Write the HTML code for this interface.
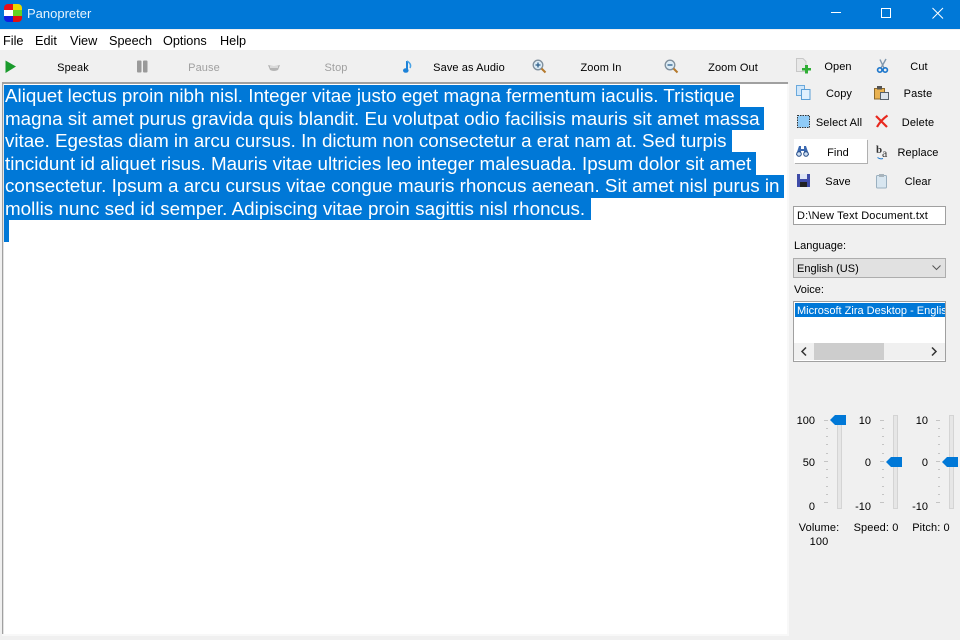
<!DOCTYPE html>
<html><head><meta charset="utf-8"><title>Panopreter</title>
<style>
html,body{margin:0;padding:0;width:960px;height:640px;overflow:hidden;background:#f0f0f0;font-family:"Liberation Sans",sans-serif;color:#000}
.a{position:absolute;white-space:nowrap}
.t{position:absolute;white-space:nowrap;font-size:11px;line-height:14px;transform:translate(-50%,1px);letter-spacing:.1px}
.g{color:#a0a0a0}
.m{position:absolute;top:33px;font-size:12.7px;line-height:16px;white-space:nowrap}
.sel{position:absolute;left:4px;height:23px;background:#0078d7}
.ln{position:absolute;left:5px;font-size:18.8px;line-height:22px;color:#fff;white-space:nowrap}
.n{position:absolute;font-size:11px;line-height:14px;text-align:right;width:30px;transform:translateY(1px)}
svg{position:absolute;overflow:visible}
</style></head><body>
<div class="a" style="left:0;top:0;width:960px;height:29px;background:#0078d7"></div>
<svg style="left:4px;top:4px" width="18" height="18" viewBox="0 0 18 18">
<defs><clipPath id="c"><rect width="18" height="18" rx="4"/></clipPath></defs>
<g clip-path="url(#c)"><rect width="9" height="6" fill="#e8101a"/><rect x="9" width="9" height="6" fill="#e8d800"/><rect y="6" width="9" height="6" fill="#fff"/><rect x="9" y="6" width="9" height="6" fill="#62d321"/><rect y="12" width="9" height="6" fill="#1020e0"/><rect x="9" y="12" width="9" height="6" fill="#e01010"/></g></svg>
<div class="a" style="left:27px;top:6px;font-size:13px;line-height:16px;color:#e8f3fc">Panopreter</div>
<svg style="left:831px;top:7px" width="120" height="14"><path d="M0 5.500H10" stroke="#fff" fill="none"/><rect x="50.500" y="1.500" width="9" height="9" stroke="#fff" fill="none"/><path d="M101.500 1L112 11.500M112 1L101.500 11.500" stroke="#fff" fill="none"/></svg>

<div class="a" style="left:0;top:30px;width:960px;height:20px;background:#fff"></div>
<div class="m" style="left:3px">File</div><div class="m" style="left:35px">Edit</div><div class="m" style="left:70px">View</div><div class="m" style="left:109px">Speech</div><div class="m" style="left:163px">Options</div><div class="m" style="left:220px">Help</div>

<svg style="left:5px;top:60px" width="12" height="14"><path d="M0.500 0.500L11 6.500L0.500 13Z" fill="#1a9a2c"/></svg>
<div class="t" style="left:73px;top:60px">Speak</div>
<svg style="left:137px;top:60px" width="12" height="13"><rect x="0" y="0.500" width="4.500" height="12" rx="1" fill="#9a9a9a"/><rect x="6" y="0.500" width="4.500" height="12" rx="1" fill="#9a9a9a"/></svg>
<div class="t g" style="left:204px;top:60px">Pause</div>
<svg style="left:268px;top:64px" width="13" height="9"><path d="M0 1Q6 3 12 1L10 6Q6 8 2 6Z" fill="#b4b4b4"/><path d="M2 3H10" stroke="#fff"/></svg>
<div class="t g" style="left:336px;top:60px">Stop</div>
<svg style="left:403px;top:60px" width="10" height="14"><path d="M4 1V10" stroke="#1c82d8" stroke-width="2"/><ellipse cx="2.800" cy="10.500" rx="2.800" ry="2.300" fill="#1c82d8"/><path d="M4 1Q9 4 7 8" stroke="#4aa3e6" stroke-width="1.500" fill="none"/></svg>
<div class="t" style="left:469px;top:60px">Save as Audio</div>
<svg style="left:532px;top:59px" width="15" height="15"><circle cx="6" cy="6" r="4.800" fill="#dcebf5" stroke="#7f8f9c" stroke-width="1.300"/><path d="M3.500 6H8.500M6 3.500V8.500" stroke="#2d5f8a" stroke-width="1.300"/><path d="M9.500 9.500L13.500 13.500" stroke="#b5792c" stroke-width="2"/></svg>
<div class="t" style="left:601px;top:60px">Zoom In</div>
<svg style="left:664px;top:59px" width="15" height="15"><circle cx="6" cy="6" r="4.800" fill="#dcebf5" stroke="#7f8f9c" stroke-width="1.300"/><path d="M3.500 6H8.500" stroke="#2d5f8a" stroke-width="1.300"/><path d="M9.500 9.500L13.500 13.500" stroke="#b5792c" stroke-width="2"/></svg>
<div class="t" style="left:733px;top:60px">Zoom Out</div>

<div class="a" style="left:2px;top:82px;width:786px;height:553px;background:#fff;box-shadow:inset 1px 0 0 #a0a0a0,inset 2px 0 0 #e3e3e3,inset -1px -1px 0 #f0f0f0;"></div>
<div class="a" style="left:2px;top:82px;width:786px;height:2px;background:#a0a0a0"></div>
<div class="a" style="left:787px;top:84px;width:2px;height:552px;background:#f8f8f8"></div>
<div class="a" style="left:2px;top:634px;width:787px;height:2px;background:#f8f8f8"></div>

<div class="sel" style="top:85px;width:736px"></div>
<div class="sel" style="top:107px;width:760px"></div>
<div class="sel" style="top:130px;width:728px"></div>
<div class="sel" style="top:152px;width:752px"></div>
<div class="sel" style="top:175px;width:780px"></div>
<div class="sel" style="top:197px;width:587px"></div>
<div class="sel" style="top:219px;width:5px;height:23px"></div>
<div class="ln" style="top:85px">Aliquet lectus proin nibh nisl. Integer vitae justo eget magna fermentum iaculis. Tristique</div>
<div class="ln" style="top:108px;letter-spacing:.033px">magna sit amet purus gravida quis blandit. Eu volutpat odio facilisis mauris sit amet massa</div>
<div class="ln" style="top:130px;letter-spacing:-.01px">vitae. Egestas diam in arcu cursus. In dictum non consectetur a erat nam at. Sed turpis</div>
<div class="ln" style="top:153px;letter-spacing:.01px">tincidunt id aliquet risus. Mauris vitae ultricies leo integer malesuada. Ipsum dolor sit amet</div>
<div class="ln" style="top:175px;letter-spacing:.01px">consectetur. Ipsum a arcu cursus vitae congue mauris rhoncus aenean. Sit amet nisl purus in</div>
<div class="ln" style="top:198px;letter-spacing:.04px">mollis nunc sed id semper. Adipiscing vitae proin sagittis nisl rhoncus.</div>

<!-- right buttons -->
<div class="a" style="left:794px;top:139px;width:73px;height:24px;background:#fff;box-shadow:1px 1px 0 #b0b0b0"></div>
<svg style="left:796px;top:58px" width="15" height="15"><path d="M0.500 0.500H7L10 3.500V13.500H0.500Z" fill="#e8e8e8" stroke="#c8c8c8"/><path d="M9 7H12V10H15V12.500H12V15.500H9V12.500H6V10H9Z" fill="#2fae35"/></svg>
<div class="t" style="left:838px;top:59px">Open</div>
<svg style="left:877px;top:58px" width="12" height="16"><path d="M9 1L4 10M3 1.500L7 10" stroke="#7f97ad" stroke-width="1.400" fill="none"/><circle cx="2.800" cy="12" r="2.200" fill="none" stroke="#1f78cc" stroke-width="1.700"/><circle cx="8.200" cy="12" r="2.200" fill="none" stroke="#1f78cc" stroke-width="1.700"/></svg>
<div class="t" style="left:919px;top:59px">Cut</div>
<svg style="left:796px;top:85px" width="15" height="15"><rect x="0.500" y="0.500" width="8" height="10" fill="#cfe6fa" stroke="#6aa9dc"/><rect x="5.500" y="4.500" width="8.500" height="10" fill="#e0f0fd" stroke="#5b9fd6"/></svg>
<div class="t" style="left:839px;top:86px">Copy</div>
<svg style="left:874px;top:86px" width="15" height="14"><rect x="0.500" y="2.500" width="10" height="10.500" fill="#e9b251" stroke="#8c6a2c"/><rect x="3" y="0" width="5" height="3.500" fill="#555"/><rect x="6.500" y="6.500" width="8" height="7" fill="#dbe3ea" stroke="#55606a"/></svg>
<div class="t" style="left:918px;top:86px">Paste</div>
<svg style="left:797px;top:115px" width="14" height="14"><rect x="0.500" y="0.500" width="12" height="12" fill="#8fcbf7" stroke="#333" stroke-dasharray="1.500 1"/></svg>
<div class="t" style="left:839px;top:115px">Select All</div>
<svg style="left:875px;top:115px" width="14" height="13"><path d="M1 1Q6 6 12 12M12.500 0.500Q6 5 2 12" stroke="#e8281e" stroke-width="2.200" fill="none"/></svg>
<div class="t" style="left:918px;top:115px">Delete</div>
<svg style="left:796px;top:145px" width="14" height="12"><path d="M3 1H5V4H8V1H10L13 10H8V6H5V10H0Z" fill="#3a68b0"/><circle cx="3" cy="9" r="2.300" fill="#cfe0f3" stroke="#274c86"/><circle cx="10" cy="9" r="2.300" fill="#cfe0f3" stroke="#274c86"/></svg>
<div class="t" style="left:838px;top:145px">Find</div>
<div class="a" style="left:876px;top:144px;font:bold 11px 'Liberation Serif',serif;line-height:13px;color:#333">b</div>
<div class="a" style="left:882px;top:147px;font:12px 'Liberation Serif',serif;line-height:13px;color:#333">a</div>
<svg style="left:877px;top:157px" width="8" height="3"><path d="M0.500 0.500Q3 2.500 6 1.500" stroke="#1f78cc" fill="none"/></svg>
<div class="t" style="left:918px;top:145px">Replace</div>
<svg style="left:797px;top:174px" width="13" height="13"><rect width="13" height="13" fill="#3f4ca8"/><rect x="3" y="0" width="7" height="5" fill="#dfe6f5"/><rect x="3" y="8" width="7" height="5" fill="#222"/></svg>
<div class="t" style="left:838px;top:174px">Save</div>
<svg style="left:876px;top:174px" width="12" height="15"><rect x="0.500" y="1.500" width="10" height="12.500" rx="1" fill="#d8e6f0" stroke="#9ab0c0"/><rect x="3" y="0" width="5" height="3" fill="#a8b4bc"/></svg>
<div class="t" style="left:918px;top:174px">Clear</div>

<div class="a" style="left:793px;top:206px;width:151px;height:17px;background:#fff;border:1px solid #a0a0a0;font-size:11px;line-height:19px;text-indent:3px;letter-spacing:.17px">D:\New Text Document.txt</div>
<div class="a" style="left:794px;top:239px;font-size:11px;line-height:14px">Language:</div>
<div class="a" style="left:793px;top:258px;width:151px;height:18px;background:#e1e1e1;border:1px solid #adadad;font-size:11px;line-height:20px;text-indent:3px">English (US)</div>
<svg style="left:932px;top:265px" width="10" height="6"><path d="M0.500 0.500L4.500 4.500L8.500 0.500" stroke="#555" fill="none"/></svg>
<div class="a" style="left:794px;top:283px;font-size:11px;line-height:14px">Voice:</div>
<div class="a" style="left:793px;top:301px;width:151px;height:59px;background:#fff;border:1px solid #a0a0a0"></div>
<div class="a" style="left:795px;top:303px;width:150px;height:14px;background:#0078d7;color:#fff;font-size:11px;line-height:16px;text-indent:2px;overflow:hidden">Microsoft Zira Desktop - English</div>
<div class="a" style="left:794px;top:343px;width:151px;height:17px;background:#f0f0f0"></div>
<div class="a" style="left:814px;top:343px;width:70px;height:17px;background:#cdcdcd"></div>
<svg style="left:801px;top:347px" width="140" height="9"><path d="M5 0.500L1 4.500L5 8.500" stroke="#333" stroke-width="1.500" fill="none"/><path d="M131 0.500L135 4.500L131 8.500" stroke="#333" stroke-width="1.500" fill="none"/></svg>

<!-- sliders -->
<div class="n" style="left:785px;top:413px">100</div><div class="n" style="left:785px;top:455px">50</div><div class="n" style="left:785px;top:499px">0</div>
<div class="n" style="left:841px;top:413px">10</div><div class="n" style="left:841px;top:455px">0</div><div class="n" style="left:841px;top:499px">-10</div>
<div class="n" style="left:898px;top:413px">10</div><div class="n" style="left:898px;top:455px">0</div><div class="n" style="left:898px;top:499px">-10</div>
<div class="a" style="left:837px;top:415px;width:3px;height:92px;background:#e6e6e6;border:.5px solid #d4d4d4"></div>
<div class="a" style="left:893px;top:415px;width:3px;height:92px;background:#e6e6e6;border:.5px solid #d4d4d4"></div>
<div class="a" style="left:949px;top:415px;width:3px;height:92px;background:#e6e6e6;border:.5px solid #d4d4d4"></div>
<svg style="left:0;top:0" width="960" height="640">
<g fill="none" stroke="#c4c4c4">
<path d="M826 428.500H828M826 436.500H828M826 444.500H828M826 453.500H828M826 469.500H828M826 477.500H828M826 486.500H828M826 494.500H828M824 420.500H828M824 461.500H828M824 502.500H828"/>
<path d="M882 428.500H884M882 436.500H884M882 444.500H884M882 453.500H884M882 469.500H884M882 477.500H884M882 486.500H884M882 494.500H884M880 420.500H884M880 461.500H884M880 502.500H884"/>
<path d="M938 428.500H940M938 436.500H940M938 444.500H940M938 453.500H940M938 469.500H940M938 477.500H940M938 486.500H940M938 494.500H940M936 420.500H940M936 461.500H940M936 502.500H940"/>
</g>
<path d="M830 420L835 415H846V425H835Z" fill="#0078d7"/>
<path d="M886 462L891 457H902V467H891Z" fill="#0078d7"/>
<path d="M942 462L947 457H958V467H947Z" fill="#0078d7"/>
</svg>
<div class="t" style="left:819px;top:520px">Volume:</div>
<div class="t" style="left:819px;top:534px">100</div>
<div class="t" style="left:876px;top:520px">Speed: 0</div>
<div class="t" style="left:931px;top:520px">Pitch: 0</div>
</body></html>
